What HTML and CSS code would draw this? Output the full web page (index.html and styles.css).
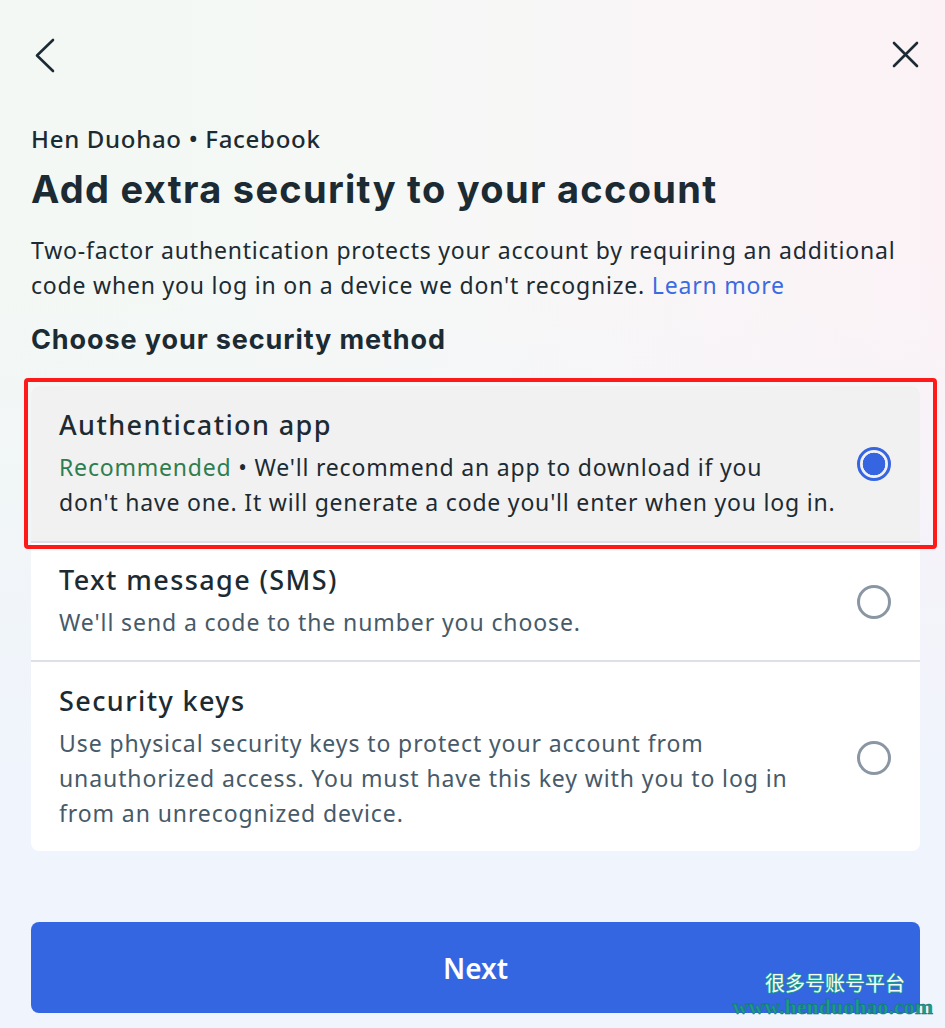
FILE: index.html
```html
<!DOCTYPE html>
<html lang="en">
<head>
<meta charset="utf-8">
<title>Add extra security to your account</title>
<link rel="stylesheet" href="styles.css">
</head>
<body>
<div class="page">
  <div class="topbar">
    <svg class="icon" width="36" height="36" viewBox="0 0 36 36" aria-label="Back">
      <path d="M26 3 L10 18.5 L26 34" fill="none" stroke="#1c2b33" stroke-width="2.6" stroke-linecap="round" stroke-linejoin="round"/>
    </svg>
    <svg class="icon" width="36" height="36" viewBox="0 0 36 36" aria-label="Close">
      <path d="M7 6 L30 29 M30 6 L7 29" fill="none" stroke="#1c2b33" stroke-width="2.6" stroke-linecap="round"/>
    </svg>
  </div>

  <div class="account">Hen Duohao • Facebook</div>
  <h1 class="title">Add extra security to your account</h1>
  <p class="intro">Two-factor authentication protects your account by requiring an additional code when you log in on a device we don't recognize. <a class="link" href="#">Learn more</a></p>
  <h2 class="subtitle">Choose your security method</h2>

  <div class="methods">
    <div class="option selected">
      <div class="option-text">
        <div class="option-title">Authentication app</div>
        <div class="option-desc dark"><span class="rec">Recommended</span> • We'll recommend an app to download if you<br>don't have one. It will generate a code you'll enter when you log in.</div>
      </div>
      <span class="radio checked"></span>
      <div class="annotation"></div>
    </div>
    <div class="option">
      <div class="option-text">
        <div class="option-title">Text message (SMS)</div>
        <div class="option-desc">We'll send a code to the number you choose.</div>
      </div>
      <span class="radio"></span>
    </div>
    <div class="option last">
      <div class="option-text">
        <div class="option-title">Security keys</div>
        <div class="option-desc">Use physical security keys to protect your account from unauthorized access. You must have this key with you to log in from an unrecognized device.</div>
      </div>
      <span class="radio"></span>
    </div>
  </div>

  <button class="next">Next</button>
</div>
<div class="watermark">
  <div class="wm-cn">很多号账号平台</div>
  <div class="wm-url">www.henduohao.com</div>
</div>
</body>
</html>
```

FILE: styles.css
```css
html, body {
  margin: 0;
  padding: 0;
}
body {
  width: 945px;
  height: 1028px;
  overflow: hidden;
  position: relative;
  font-family: "Noto Sans", "Open Sans", sans-serif;
  color: #1c2b33;
  background:
    linear-gradient(to bottom, rgba(240,244,252,0) 0%, rgba(240,244,252,0) 25%, #f0f4fc 75%, #f0f4fc 100%),
    linear-gradient(to right, #f3f8f4 0%, #f6f8f6 45%, #faf5f7 75%, #fcf2f6 100%);
}
.page {
  padding: 0 25px 0 31px;
}
.topbar {
  display: flex;
  justify-content: space-between;
  padding: 37px 0 0 0;
  margin: 0 -3px 0 -4px;
}
.icon {
  display: block;
}
.account {
  margin-top: 51px;
  font-size: 24px;
  line-height: 30px;
  font-weight: 500;
  letter-spacing: 0.7px;
}
.title {
  margin: 12px 0 0;
  font-family: "Inter", "Noto Sans", sans-serif;
  font-size: 38px;
  line-height: 46px;
  font-weight: 700;
  letter-spacing: 1.3px;
}
.intro {
  margin: 21px 0 0;
  font-size: 23px;
  line-height: 35px;
  letter-spacing: 0.8px;
}
.link {
  color: #3a6be0;
  text-decoration: none;
}
.subtitle {
  margin: 20px 0 0;
  font-family: "Inter", "Noto Sans", sans-serif;
  font-size: 27px;
  line-height: 34px;
  font-weight: 700;
  letter-spacing: 0.9px;
}
.methods {
  margin-top: 29px;
  background: #ffffff;
  border-radius: 8px;
}
.option {
  position: relative;
  display: flex;
  align-items: center;
  gap: 12px;
  padding: 20px 29px 20px 28px;
  border-bottom: 2px solid #dde1e7;
}
.option.selected {
  padding-top: 22px;
  padding-bottom: 21px;
  background: #f1f1f1;
  border-radius: 8px 8px 0 0;
}
.option.last {
  padding-top: 22px;
  border-bottom: none;
}
.option-text {
  flex: 1;
  min-width: 0;
}
.option-title {
  font-size: 27px;
  line-height: 34px;
  font-weight: 500;
  letter-spacing: 1.4px;
}
.option-desc {
  margin-top: 8px;
  font-size: 23px;
  line-height: 35px;
  letter-spacing: 0.9px;
  color: #465a69;
}
.option-desc.dark {
  color: #1c2b33;
  white-space: nowrap;
  letter-spacing: 0.8px;
}
.rec {
  color: #2e7d4f;
}
.radio {
  flex: none;
  box-sizing: border-box;
  width: 34px;
  height: 34px;
  border-radius: 50%;
  border: 3px solid #8a96a3;
}
.radio.checked {
  border-color: #3565e0;
  background: radial-gradient(circle, #3565e0 0 11px, transparent 11.6px);
}
.annotation {
  position: absolute;
  left: -7px;
  right: -17px;
  top: -8px;
  bottom: -8px;
  border: 4px solid #ff1a1a;
  border-radius: 4px;
  pointer-events: none;
}
.next {
  display: block;
  width: 100%;
  margin-top: 71px;
  height: 91px;
  border: none;
  border-radius: 8px;
  background: #3566e1;
  color: #ffffff;
  font-family: "Noto Sans", sans-serif;
  font-size: 28px;
  font-weight: 600;
}
.watermark {
  position: absolute;
  right: 12px;
  bottom: 10px;
  text-align: right;
}
.wm-cn {
  font-family: "Noto Sans CJK SC", sans-serif;
  font-size: 20px;
  line-height: 26px;
  font-weight: 400;
  color: #f2fffc;
  text-shadow: 1px 0 0 #1a9c8b, -1px 0 0 #1a9c8b, 0 1px 0 #1a9c8b, 0 -1px 0 #1a9c8b;
  margin-right: 28px;
}
.wm-url {
  font-family: "Liberation Serif", serif;
  font-size: 22px;
  line-height: 22px;
  font-weight: 700;
  color: #1b9c8c;
  -webkit-text-stroke: 0.4px #0c6b66;
}
```
